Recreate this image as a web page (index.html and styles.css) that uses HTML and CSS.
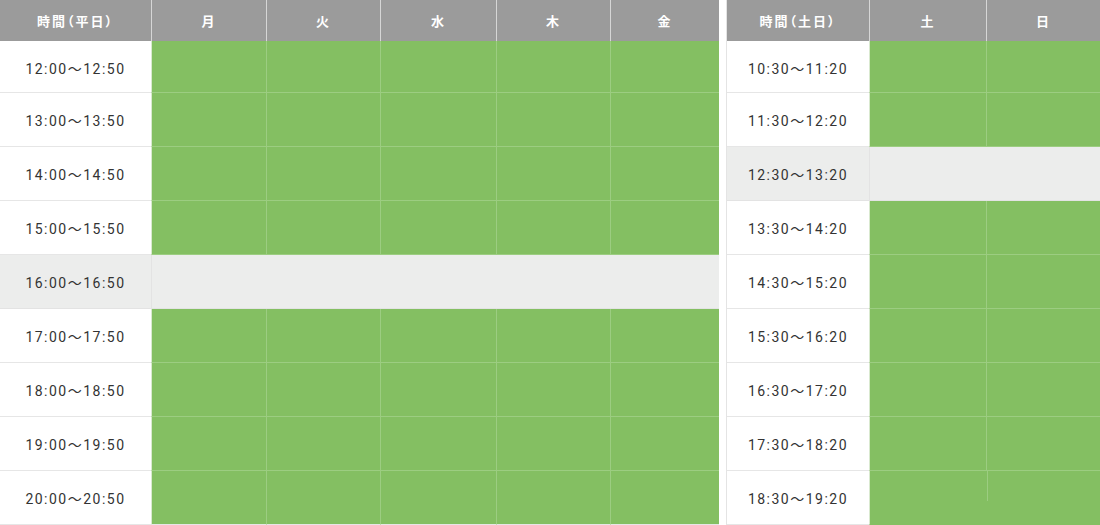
FILE: index.html
```html
<!DOCTYPE html>
<html lang="ja">
<head>
<meta charset="utf-8">
<link rel="stylesheet" href="styles.css">
</head>
<body>
<div class="page">
  <table class="sched weekday">
    <colgroup>
      <col class="c-time"><col class="c-d1"><col class="c-d2"><col class="c-d3"><col class="c-d4"><col class="c-d5">
    </colgroup>
    <thead>
      <tr><th>時間（平日）</th><th>月</th><th>火</th><th>水</th><th>木</th><th>金</th></tr>
    </thead>
    <tbody>
      <tr class="first"><td class="time">12:00〜12:50</td><td class="on"></td><td class="on"></td><td class="on"></td><td class="on"></td><td class="on"></td></tr>
      <tr><td class="time">13:00〜13:50</td><td class="on"></td><td class="on"></td><td class="on"></td><td class="on"></td><td class="on"></td></tr>
      <tr><td class="time">14:00〜14:50</td><td class="on"></td><td class="on"></td><td class="on"></td><td class="on"></td><td class="on"></td></tr>
      <tr><td class="time">15:00〜15:50</td><td class="on"></td><td class="on"></td><td class="on"></td><td class="on"></td><td class="on"></td></tr>
      <tr class="off"><td class="time">16:00〜16:50</td><td class="closed" colspan="5"></td></tr>
      <tr><td class="time">17:00〜17:50</td><td class="on"></td><td class="on"></td><td class="on"></td><td class="on"></td><td class="on"></td></tr>
      <tr><td class="time">18:00〜18:50</td><td class="on"></td><td class="on"></td><td class="on"></td><td class="on"></td><td class="on"></td></tr>
      <tr><td class="time">19:00〜19:50</td><td class="on"></td><td class="on"></td><td class="on"></td><td class="on"></td><td class="on"></td></tr>
      <tr><td class="time">20:00〜20:50</td><td class="on"></td><td class="on"></td><td class="on"></td><td class="on"></td><td class="on"></td></tr>
    </tbody>
  </table>
  <table class="sched weekend">
    <colgroup>
      <col class="w-time"><col class="w-d1"><col class="w-d2">
    </colgroup>
    <thead>
      <tr><th>時間（土日）</th><th>土</th><th>日</th></tr>
    </thead>
    <tbody>
      <tr class="first"><td class="time">10:30〜11:20</td><td class="on"></td><td class="on"></td></tr>
      <tr><td class="time">11:30〜12:20</td><td class="on"></td><td class="on"></td></tr>
      <tr class="off"><td class="time">12:30〜13:20</td><td class="closed" colspan="2"></td></tr>
      <tr><td class="time">13:30〜14:20</td><td class="on"></td><td class="on"></td></tr>
      <tr><td class="time">14:30〜15:20</td><td class="on"></td><td class="on"></td></tr>
      <tr><td class="time">15:30〜16:20</td><td class="on"></td><td class="on"></td></tr>
      <tr><td class="time">16:30〜17:20</td><td class="on"></td><td class="on"></td></tr>
      <tr><td class="time">17:30〜18:20</td><td class="on"></td><td class="on"></td></tr>
      <tr class="last"><td class="time">18:30〜19:20</td><td class="on"></td><td class="on short"></td></tr>
    </tbody>
  </table>
</div>
</body>
</html>
```
FILE: styles.css
```css
html, body {
  margin: 0;
  padding: 0;
  background: #ffffff;
}
body {
  font-family: "Noto Sans CJK JP", "Noto Sans", sans-serif;
  color: #333333;
}
.page {
  display: flex;
  align-items: flex-start;
  gap: 7px;
  width: 1100px;
  height: 525px;
  overflow: hidden;
}
.sched {
  border-collapse: separate;
  border-spacing: 0;
  table-layout: fixed;
}
.weekday { width: 719px; }
.weekend { width: 374px; border-left: 1px solid #e4e4e4; }
.c-time { width: 151px; }
.c-d1 { width: 115px; }
.c-d2 { width: 114px; }
.c-d3 { width: 116px; }
.c-d4 { width: 114px; }
.c-d5 { width: 109px; }
.w-time { width: 142px; }
.w-d1 { width: 117px; }
.w-d2 { width: 114px; }

.sched th {
  height: 41px;
  padding: 0;
  background: #9b9b9b;
  color: #ffffff;
  font-size: 13px;
  font-weight: 700;
  letter-spacing: 2px;
  font-feature-settings: "palt";
  text-align: center;
  vertical-align: middle;
  border-left: 1px solid #d6d6d6;
}
.sched th:first-child { border-left: none; }

.sched td {
  padding: 0;
  height: 53px;
  border-bottom: 1px solid #e6e6e6;
}
.sched tr.first td { height: 50px; padding-top: 1px; }
.sched td.time {
  text-align: center;
  vertical-align: middle;
  font-family: Roboto, "Noto Sans CJK JP", sans-serif;
  font-size: 14px;
  letter-spacing: 1.5px;
  color: #333333;
  background: #ffffff;
  padding-top: 1px;
  height: 52px;
}
.sched tr.first td.time { height: 49px; padding-top: 2px; }
.sched td.on {
  background: #84bf62;
  border-left: 1px solid #9ccd81;
  border-bottom: 1px solid #9ccd81;
}
.sched td.on:nth-child(2) { border-left: 1px solid #d9e9cf; }
.sched tbody tr:last-child td { border-bottom-color: #e6e6e6; }
.weekend tbody tr:last-child td.on { border-bottom-color: #84bf62; }
.weekend td.on.short {
  border-left-color: #84bf62;
  background-image: linear-gradient(#9ccd81, #9ccd81);
  background-size: 1px 30px;
  background-position: 0 0;
  background-repeat: no-repeat;
}
.sched tr.off td {
  background: #ecedec;
  border-bottom: 1px solid #e3e3e3;
}
.sched tr.off td.closed { border-left: 1px solid #e3e3e3; }
```
